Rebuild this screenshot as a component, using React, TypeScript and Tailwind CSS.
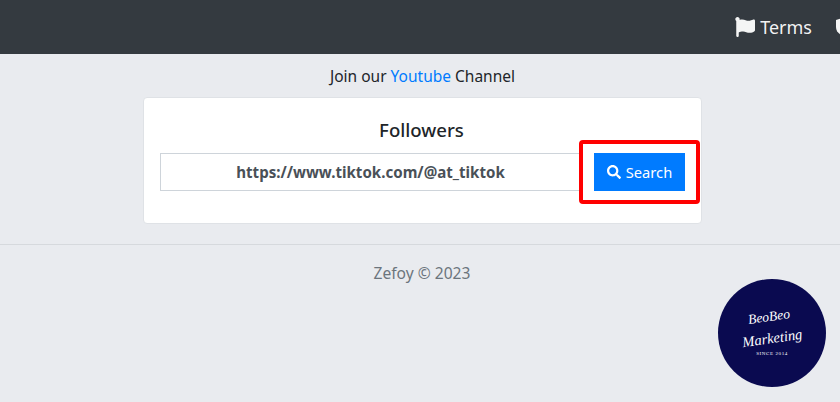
import { FaFlag, FaSearch } from 'react-icons/fa';

const App = () => {
  return (
    <div className="relative h-[402px] w-[840px] overflow-hidden bg-[#e9ebef] font-['Noto_Sans',sans-serif] text-[#212529]">
      <nav className="flex h-[54px] items-center justify-end gap-[24px] overflow-hidden bg-[#343a40] text-white">
        <a className="flex shrink-0 items-center gap-[5px] text-[18px] text-white/95">
          <FaFlag size={20} />
          Terms
        </a>
        <svg className="mr-[-14px] shrink-0 text-white/95" width="18" height="20" viewBox="0 0 18 20" fill="currentColor">
          <path d="M9 0l9 3v7c0 5-4 8-9 10-5-2-9-5-9-10V3z" />
        </svg>
      </nav>

      <p className="mt-[12px] pl-[5px] text-center text-[15.5px] leading-5">
        Join our <a className="text-[#007bff]">Youtube</a> Channel
      </p>

      <main className="ml-[143px] mt-[11px] h-[127px] w-[559px] rounded border border-[#dfe2e6] bg-white px-4 pt-[20px]">
        <h2 className="pr-[2px] text-center text-[18.6px] font-medium leading-6">Followers</h2>
        <form className="mt-[11px] flex items-stretch">
          <div className="flex h-[38px] w-[421px] items-center justify-center border border-[#ced4da] bg-white pt-[1px] text-[15.1px] font-bold text-[#495057]">
            https://www.tiktok.com/@at_tiktok
          </div>
          <button className="ml-[13px] flex h-[38px] w-[91px] items-center justify-center gap-[5px] bg-[#007bff] text-[14.7px] text-white">
            <FaSearch size={14} />
            Search
          </button>
        </form>
      </main>

      <hr className="mt-[20px] border-[#d6d9dd]" />
      <p className="mt-[18px] pl-[4px] text-center text-[15.6px] leading-5 text-[#6c757d]">Zefoy © 2023</p>

      {/* red highlight drawn over the button */}
      <div className="absolute left-[579px] top-[140px] h-[64px] w-[121px] rounded-[4px] border-[4px] border-[#ff0000]" />

      <div className="absolute left-[718px] top-[279px] flex h-[108px] w-[108px] flex-col items-center justify-center rounded-full bg-[#0a0a50] pt-[2px] text-white">
        <div className="mr-[6px] -rotate-[8deg] font-['Liberation_Serif',serif] text-[13.5px] italic leading-[12px]">BeoBeo</div>
        <div className="mt-[9px] -rotate-[8deg] font-['Liberation_Serif',serif] text-[14.5px] italic leading-[12px]">Marketing</div>
        <div className="mt-[7px] font-['Liberation_Serif',serif] text-[5px] leading-[6px] tracking-[0.12em]">SINCE 2014</div>
      </div>
    </div>
  );
};

export default App;
